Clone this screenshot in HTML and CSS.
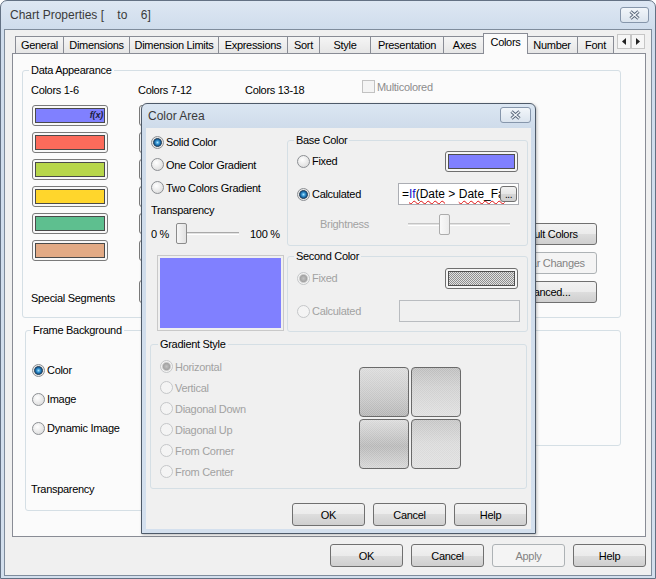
FILE: index.html
```html
<!DOCTYPE html>
<html lang="en">
<head>
<meta charset="utf-8">
<title>Chart Properties</title>
<link rel="stylesheet" href="styles.css">
</head>
<body>
<div class="window">
  <div class="titlebar">
    <span class="title">Chart Properties [&nbsp;&nbsp;&nbsp;&nbsp;to&nbsp;&nbsp;&nbsp;&nbsp;6]</span>
    <span class="close-btn">
      <svg width="13" height="10" viewBox="0 0 13 10"><path d="M2.5 1.5 L10.5 8.5 M10.5 1.5 L2.5 8.5" stroke="#5a687c" stroke-width="3.2"/><path d="M2.5 1.5 L10.5 8.5 M10.5 1.5 L2.5 8.5" stroke="#f4f7fa" stroke-width="1.2"/></svg>
    </span>
  </div>
  <div class="client">
    <div class="tabs">
      <div class="tab tab-general">General</div>
      <div class="tab tab-dimensions">Dimensions</div>
      <div class="tab tab-limits">Dimension Limits</div>
      <div class="tab tab-expressions">Expressions</div>
      <div class="tab tab-sort">Sort</div>
      <div class="tab tab-style">Style</div>
      <div class="tab tab-presentation">Presentation</div>
      <div class="tab tab-axes">Axes</div>
      <div class="tab tab-colors sel">Colors</div>
      <div class="tab tab-number">Number</div>
      <div class="tab tab-font">Font</div>
      <div class="tab-scroll">
        <span class="scroll-btn"><svg width="4" height="7" viewBox="0 0 4 7"><path d="M4 0 L0 3.5 L4 7 Z" fill="#222"/></svg></span>
        <span class="scroll-btn"><svg width="4" height="7" viewBox="0 0 4 7"><path d="M0 0 L4 3.5 L0 7 Z" fill="#222"/></svg></span>
      </div>
    </div>

    <div class="panel">
      <div class="group g-data">
        <span class="legend">Data Appearance</span>
        <div class="col col-a">
          <div class="head">Colors 1-6</div>
          <div class="swatches">
            <div class="swatch"><div class="fill c-blue"><i class="fx">f(x)</i></div></div>
            <div class="swatch"><div class="fill c-red"></div></div>
            <div class="swatch"><div class="fill c-lime"></div></div>
            <div class="swatch"><div class="fill c-yellow"></div></div>
            <div class="swatch"><div class="fill c-green"></div></div>
            <div class="swatch"><div class="fill c-tan"></div></div>
          </div>
          <div class="special-lbl">Special Segments</div>
        </div>
        <div class="col col-b">
          <div class="head">Colors 7-12</div>
          <div class="swatches">
            <div class="swatch"><div class="fill c-blue"></div></div>
            <div class="swatch"><div class="fill c-red"></div></div>
            <div class="swatch"><div class="fill c-lime"></div></div>
            <div class="swatch"><div class="fill c-yellow"></div></div>
            <div class="swatch"><div class="fill c-green"></div></div>
            <div class="swatch"><div class="fill c-tan"></div></div>
          </div>
          <div class="swatch special-sw"><div class="fill c-gray"></div></div>
        </div>
        <div class="col col-c">
          <div class="head">Colors 13-18</div>
        </div>
        <div class="multi"><span class="check"></span><span>Multicolored</span></div>
        <div class="side-btns">
          <button class="btn side">Default Colors</button>
          <button class="btn side clear" disabled>Clear Changes</button>
          <button class="btn side adv">Advanced...</button>
        </div>
      </div>

      <div class="frame-row">
        <div class="group g-frame">
          <span class="legend">Frame Background</span>
          <div class="frame-opts">
            <div class="opt"><span class="radio on"></span><span>Color</span></div>
            <div class="opt"><span class="radio"></span><span>Image</span></div>
            <div class="opt"><span class="radio"></span><span>Dynamic Image</span></div>
          </div>
          <div class="frame-trans">Transparency</div>
        </div>
        <div class="group g-frame-right"></div>
      </div>
    </div>

    <div class="btn-row">
      <button class="btn">OK</button>
      <button class="btn">Cancel</button>
      <button class="btn" disabled>Apply</button>
      <button class="btn">Help</button>
    </div>
  </div>

  <div class="dlg">
    <div class="dlg-titlebar">
      <span class="dlg-title">Color Area</span>
      <span class="close-btn dlg-close">
        <svg width="13" height="10" viewBox="0 0 13 10"><path d="M2.5 1.5 L10.5 8.5 M10.5 1.5 L2.5 8.5" stroke="#5a687c" stroke-width="3.2"/><path d="M2.5 1.5 L10.5 8.5 M10.5 1.5 L2.5 8.5" stroke="#f4f7fa" stroke-width="1.2"/></svg>
      </span>
    </div>
    <div class="dlg-client">
      <div class="dlg-top">
        <div class="dlg-left">
          <div class="opt r22"><span class="radio on"></span><span>Solid Color</span></div>
          <div class="opt r23"><span class="radio"></span><span>One Color Gradient</span></div>
          <div class="opt r23"><span class="radio"></span><span>Two Colors Gradient</span></div>
          <div class="trans-lbl">Transparency</div>
          <div class="slider-row">
            <span class="pct0">0 %</span>
            <span class="slider s-trans"><span class="track"></span><span class="thumb t-trans"></span></span>
            <span class="pct100">100 %</span>
          </div>
          <div class="preview"><div class="preview-fill"></div></div>
        </div>
        <div class="dlg-right">
          <div class="group g-base">
            <span class="legend">Base Color</span>
            <div class="brow b1">
              <span class="radio"></span><span class="rtext">Fixed</span>
              <span class="cswatch"><span class="cfill c-blue"></span></span>
            </div>
            <div class="brow b2">
              <span class="radio on"></span><span class="rtext">Calculated</span>
              <span class="expr"><span class="expr-text">=<span class="kw wavy">If</span><span class="wavy">(Date</span> &gt; <span class="wavy">Date_Fa</span></span><span class="dots">...</span></span>
            </div>
            <div class="brow b3">
              <span class="bright-lbl">Brightness</span>
              <span class="slider s-bright"><span class="track"></span><span class="thumb t-bright"></span></span>
            </div>
          </div>
          <div class="group g-second">
            <span class="legend">Second Color</span>
            <div class="brow s1">
              <span class="radio dis on"></span><span class="rtext dis-text">Fixed</span>
              <span class="cswatch"><span class="cfill checker"></span></span>
            </div>
            <div class="brow s2">
              <span class="radio dis"></span><span class="rtext dis-text">Calculated</span>
              <span class="expr dis-expr"></span>
            </div>
          </div>
        </div>
      </div>

      <div class="group g-grad">
        <span class="legend">Gradient Style</span>
        <div class="grad-opts">
          <div class="opt r21"><span class="radio dis on"></span><span class="dis-text">Horizontal</span></div>
          <div class="opt r21"><span class="radio dis"></span><span class="dis-text">Vertical</span></div>
          <div class="opt r21"><span class="radio dis"></span><span class="dis-text">Diagonal Down</span></div>
          <div class="opt r21"><span class="radio dis"></span><span class="dis-text">Diagonal Up</span></div>
          <div class="opt r21"><span class="radio dis"></span><span class="dis-text">From Corner</span></div>
          <div class="opt r21"><span class="radio dis"></span><span class="dis-text">From Center</span></div>
        </div>
        <div class="tiles">
          <span class="tile tile-h"></span>
          <span class="tile tile-v"></span>
          <span class="tile tile-dd"></span>
          <span class="tile tile-du"></span>
        </div>
      </div>

      <div class="dlg-btns">
        <button class="btn">OK</button>
        <button class="btn">Cancel</button>
        <button class="btn">Help</button>
      </div>
    </div>
  </div>
</div>
</body>
</html>
```

FILE: styles.css
```css
* { box-sizing: border-box; }
html, body { margin: 0; padding: 0; }
body {
  width: 656px;
  height: 579px;
  overflow: hidden;
  background: #ffffff;
  font-family: "Liberation Sans", Arial, sans-serif;
  font-size: 11px;
  letter-spacing: -0.3px;
  color: #000;
}

/* ---------- main window ---------- */
.window {
  position: relative;
  width: 656px;
  height: 579px;
  border: 1px solid #637184;
  border-radius: 7px 7px 0 0;
  background: linear-gradient(#dde7f3, #cfdcec 29px, #d3dfed);
  padding: 0 3px 2px;
  display: flex;
  flex-direction: column;
}
.titlebar {
  height: 28px;
  flex: none;
  display: flex;
  align-items: flex-start;
}
.title {
  margin: 7px 0 0 6px;
  font-size: 12px;
  line-height: 15px;
  letter-spacing: 0;
  color: #3a3a3a;
  white-space: nowrap;
}
.close-btn {
  margin: 6px 3px 0 auto;
  width: 29px;
  height: 16px;
  border: 1px solid #8696ab;
  border-radius: 3px;
  background: linear-gradient(#f2f6fa, #dbe4ee);
  display: flex;
  align-items: center;
  justify-content: center;
}
.client {
  flex: 1;
  border: 1px solid #7f8c9c;
  background: #f0f0f0;
  display: flex;
  flex-direction: column;
}

/* ---------- tabs ---------- */
.tabs {
  height: 23px;
  flex: none;
  display: flex;
  align-items: flex-end;
  padding-left: 10px;
}
.tab {
  height: 17px;
  border: 1px solid #898c95;
  border-bottom: none;
  margin-left: -1px;
  background: linear-gradient(#f5f5f5, #e6e6e6);
  text-align: center;
  line-height: 16px;
  white-space: nowrap;
  flex: none;
}
.tab-general { width: 49px; margin-left: 0; }
.tab-dimensions { width: 67px; }
.tab-limits { width: 90px; }
.tab-expressions { width: 70px; }
.tab-sort { width: 33px; }
.tab-style { width: 52px; }
.tab-presentation { width: 74px; }
.tab-axes { width: 43px; }
.tab-colors { width: 45px; }
.tab-number { width: 52px; }
.tab-font { width: 37px; }
.tab.sel {
  height: 21px;
  margin: 0 -1px -1px -3px;
  background: #fbfbfb;
  position: relative;
  z-index: 2;
  line-height: 17px;
}
.tab-scroll {
  align-self: flex-start;
  margin: 4px 6px 0 auto;
  display: flex;
}
.scroll-btn {
  width: 14px;
  height: 15px;
  border: 1px solid #c6c6c6;
  background: #f6f6f6;
  display: flex;
  align-items: center;
  justify-content: center;
}

/* ---------- panel ---------- */
.panel {
  flex: none;
  margin-left: 7px;
  width: 634px;
  height: 484px;
  border: 1px solid #898c95;
  background: #fbfbfb;
  display: flex;
  flex-direction: column;
}
.group {
  position: relative;
  border: 1px solid #d5dfe5;
  border-radius: 3px;
}
.legend {
  position: absolute;
  top: -7px;
  left: 6px;
  padding: 0 2px;
  line-height: 13px;
  background: #fbfbfb;
  white-space: nowrap;
}
.g-data {
  flex: none;
  margin: 16px 24px 0 9px;
  height: 248px;
  padding-left: 8px;
  display: flex;
}
.col {
  flex: none;
  display: flex;
  flex-direction: column;
}
.col-a, .col-b { width: 107px; }
.col-c { width: 117px; }
.head {
  margin-top: 13px;
  line-height: 13px;
  white-space: nowrap;
}
.swatches {
  margin-top: 8px;
  padding-left: 1px;
  display: flex;
  flex-direction: column;
  gap: 6px;
}
.swatch {
  width: 76px;
  height: 21px;
  border: 1px solid #7a7a7a;
  border-radius: 3px;
  padding: 2px;
  background: #f8f8f8;
}
.fill {
  height: 100%;
  border: 1px solid #4a4a4a;
  position: relative;
}
.c-blue { background: #8080ff; }
.c-red { background: #fc6b5b; }
.c-lime { background: #b7d64a; }
.c-yellow { background: #ffd62c; }
.c-green { background: #5ebf8f; }
.c-tan { background: #e2aa85; }
.c-gray { background: #d8d8d8; }
.fx {
  position: absolute;
  right: 1px;
  top: 1px;
  font-size: 9px;
  line-height: 11px;
  font-weight: bold;
  letter-spacing: -0.2px;
  color: #1c1c3c;
}
.special-lbl {
  margin-top: 31px;
  line-height: 13px;
  white-space: nowrap;
}
.special-sw {
  margin-top: 19px;
  margin-left: 1px;
  height: 23px;
}
.multi {
  flex: none;
  margin-top: 9px;
  height: 13px;
  display: flex;
  align-items: center;
  gap: 2px;
  color: #8d8d8d;
  white-space: nowrap;
}
.check {
  width: 13px;
  height: 13px;
  border: 1px solid #c2c2c2;
  background: #f4f4f4;
}
.side-btns {
  flex: none;
  margin: 152px 23px 0 auto;
  width: 104px;
  display: flex;
  flex-direction: column;
}
.btn.side { width: 104px; height: 22px; }
.btn.side + .btn.side { margin-top: 7px; }
.btn.side:last-child { margin-top: 6px; }
.btn.clear { padding-left: 10px; }
.btn.adv { padding-right: 4px; }

.frame-row {
  flex: none;
  display: flex;
  align-items: flex-start;
  gap: 10px;
  margin: 12px 24px 0 12px;
}
.g-frame {
  width: 300px;
  height: 181px;
  padding-left: 6px;
  display: flex;
  flex-direction: column;
}
.g-frame .legend { left: 5px; }
.frame-opts {
  margin-top: 28px;
  display: flex;
  flex-direction: column;
  gap: 7px;
}
.frame-trans {
  margin: 44px 0 0 -1px;
  line-height: 13px;
}
.g-frame-right {
  flex: 1;
  height: 116px;
}

/* ---------- buttons ---------- */
.btn {
  width: 73px;
  height: 23px;
  padding: 0;
  border: 1px solid #707070;
  border-radius: 3px;
  background: linear-gradient(#f2f2f2 0%, #ebebeb 50%, #dddddd 50%, #cfcfcf 100%);
  font: inherit;
  letter-spacing: inherit;
  color: #000;
  text-align: center;
  white-space: nowrap;
  overflow: hidden;
  flex: none;
}
.btn:disabled {
  border-color: #adb2b5;
  background: #f4f4f4;
  color: #838383;
}
.btn-row {
  flex: none;
  display: flex;
  justify-content: flex-end;
  gap: 8px;
  margin-top: 7px;
  padding-right: 5px;
}

/* ---------- radio ---------- */
.opt {
  display: flex;
  align-items: center;
  gap: 2px;
  height: 22px;
  white-space: nowrap;
}
.radio {
  flex: none;
  width: 13px;
  height: 13px;
  border-radius: 50%;
  border: 1px solid #8c8f93;
  background: radial-gradient(circle at 40% 35%, #ffffff 0, #ececec 45%, #d5d5d5 100%);
}
.radio.on {
  background: radial-gradient(circle at 50% 50%, #a9e4ff 0, #3394d2 1.8px, #114a7c 3.6px, #53606c 4.2px, #ececec 4.7px, #d7d7d7 6.5px);
}
.radio.dis {
  border-color: #c5c7c9;
  background: #f4f4f4;
}
.radio.dis.on {
  background: radial-gradient(circle at 50% 50%, #c2c2c2 0, #a3a3a3 3.3px, #cfcfcf 4.1px, #f4f4f4 5px);
}
.dis-text { color: #a2a2a2; }

/* ---------- dialog ---------- */
.dlg {
  position: absolute;
  left: 140px;
  top: 102px;
  width: 395px;
  height: 431px;
  border: 1px solid #4e5a69;
  border-radius: 6px 6px 0 0;
  background: linear-gradient(#dbe6f2, #cedbea 25px, #d4e0ee);
  padding: 0 4px 4px;
  display: flex;
  flex-direction: column;
  z-index: 5;
  box-shadow: 1px 1px 3px rgba(0, 0, 0, 0.25);
}
.dlg .legend { background: #f0f0f0; }
.dlg-titlebar {
  height: 24px;
  flex: none;
  display: flex;
  align-items: flex-start;
}
.dlg-title {
  margin: 5px 0 0 2px;
  font-size: 12px;
  line-height: 15px;
  letter-spacing: 0;
  color: #3a3a3a;
}
.close-btn.dlg-close {
  margin: 3px 0 0 auto;
  width: 31px;
}
.dlg-client {
  flex: 1;
  background: #f0f0f0;
  display: flex;
  flex-direction: column;
}
.dlg-top {
  flex: none;
  display: flex;
}
.dlg-left {
  width: 141px;
  flex: none;
  padding: 3px 0 0 5px;
  display: flex;
  flex-direction: column;
}
.opt.r22 { height: 22px; }
.opt.r23 { height: 23px; }
.opt.r21 { height: 21px; }
.trans-lbl {
  height: 23px;
  line-height: 23px;
  white-space: nowrap;
}
.slider-row {
  height: 23px;
  display: flex;
  align-items: center;
  white-space: nowrap;
}
.pct0 { width: 25px; flex: none; }
.pct100 { margin-left: 11px; }
.slider {
  position: relative;
  height: 21px;
  flex: none;
}
.track {
  position: absolute;
  left: 0;
  right: 0;
  top: 9px;
  height: 3px;
  border-top: 1px solid #a9a9a9;
  border-bottom: 1px solid #ffffff;
  background: #e2e2e2;
}
.thumb {
  position: absolute;
  top: 0;
  width: 11px;
  height: 21px;
  border: 1px solid #8b8b8b;
  border-radius: 2px;
  background: linear-gradient(90deg, #f7f7f7, #e1e1e1);
}
.s-trans { width: 63px; }
.t-trans { left: 0; }
.s-bright { width: 117px; margin-left: auto; }
.s-bright .track { left: 6px; right: 9px; border-top-color: #c4c4c4; }
.t-bright { left: 37px; border-color: #acacac; background: linear-gradient(90deg, #f9f9f9, #ececec); }
.preview {
  margin: 10px 0 0 6px;
  width: 127px;
  height: 76px;
  border: 1px solid #c9c9c9;
  padding: 2px;
}
.preview-fill {
  height: 100%;
  background: #8080ff;
}
.dlg-right {
  width: 241px;
  flex: none;
}
.g-base {
  margin-top: 12px;
  height: 106px;
}
.g-second {
  margin-top: 10px;
  height: 76px;
}
.brow {
  height: 22px;
  display: flex;
  align-items: center;
  padding: 0 9px;
  white-space: nowrap;
}
.rtext { margin-left: 2px; }
.b1 { margin-top: 9px; }
.b2 { margin-top: 11px; padding-right: 8px; }
.b3 { margin-top: 8px; padding-right: 8px; }
.s1 { margin-top: 10px; }
.s2 { margin-top: 11px; padding-right: 7px; }
.cswatch {
  margin-left: auto;
  width: 73px;
  height: 21px;
  border: 1px solid #6f6f6f;
  border-radius: 3px;
  padding: 2px;
  background: #f6f6f6;
  display: flex;
}
.cfill {
  flex: 1;
  border: 1px solid #4f4f4f;
}
.checker {
  background: repeating-conic-gradient(#8f8f8f 0 25%, #e2e2e2 0 50%) 0 0 / 2px 2px;
}
.expr {
  margin-left: auto;
  width: 121px;
  height: 22px;
  border: 1px solid #abadb3;
  background: #ffffff;
  position: relative;
  overflow: hidden;
  display: flex;
  align-items: center;
  padding-left: 3px;
  font-size: 12px;
  letter-spacing: 0;
  white-space: nowrap;
}
.expr-text { line-height: 16px; }
.kw { color: #1010c8; }
.wavy {
  text-decoration: underline wavy #e01010;
  text-decoration-thickness: 1px;
  text-underline-offset: 2px;
}
.dots {
  position: absolute;
  right: 1px;
  top: 2px;
  width: 17px;
  height: 16px;
  border: 1px solid #707070;
  border-radius: 3px;
  background: linear-gradient(#f2f2f2, #e6e6e6 50%, #d6d6d6 50%, #cfcfcf);
  font-size: 10px;
  line-height: 15px;
  text-align: center;
  letter-spacing: -0.5px;
}
.dis-expr {
  background: #f0f0f0;
  border-color: #b9bcc0;
}
.bright-lbl {
  margin-left: 23px;
  color: #a2a2a2;
}
.g-grad {
  flex: none;
  margin: 12px 0 0 4px;
  width: 377px;
  height: 145px;
  display: flex;
}
.g-grad .legend { left: 7px; }
.grad-opts {
  width: 208px;
  flex: none;
  padding: 11px 0 0 9px;
  display: flex;
  flex-direction: column;
}
.tiles {
  margin-top: 22px;
  display: grid;
  grid-template-columns: 50px 50px;
  grid-template-rows: 50px 50px;
  gap: 2px;
}
.tile {
  border: 1px solid #6a6a6a;
  border-radius: 4px;
}
.tile-h {
  background:
    repeating-conic-gradient(rgba(255,255,255,0.22) 0 25%, transparent 0 50%) 0 0 / 2px 2px,
    linear-gradient(#dadada, #c6c6c6 60%, #b3b3b3);
}
.tile-v {
  background:
    repeating-conic-gradient(rgba(255,255,255,0.22) 0 25%, transparent 0 50%) 0 0 / 2px 2px,
    linear-gradient(#bcbcbc, #cfcfcf 40%, #dedede);
}
.tile-dd {
  background:
    repeating-conic-gradient(rgba(255,255,255,0.22) 0 25%, transparent 0 50%) 0 0 / 2px 2px,
    linear-gradient(#dadada, #b6b6b6 55%, #d4d4d4);
}
.tile-du {
  background:
    repeating-conic-gradient(rgba(255,255,255,0.22) 0 25%, transparent 0 50%) 0 0 / 2px 2px,
    linear-gradient(#c4c4c4, #d9d9d9 50%, #dedede);
}
.dlg-btns {
  flex: none;
  display: flex;
  justify-content: flex-end;
  gap: 8px;
  margin-top: 14px;
  padding-right: 4px;
}
```
